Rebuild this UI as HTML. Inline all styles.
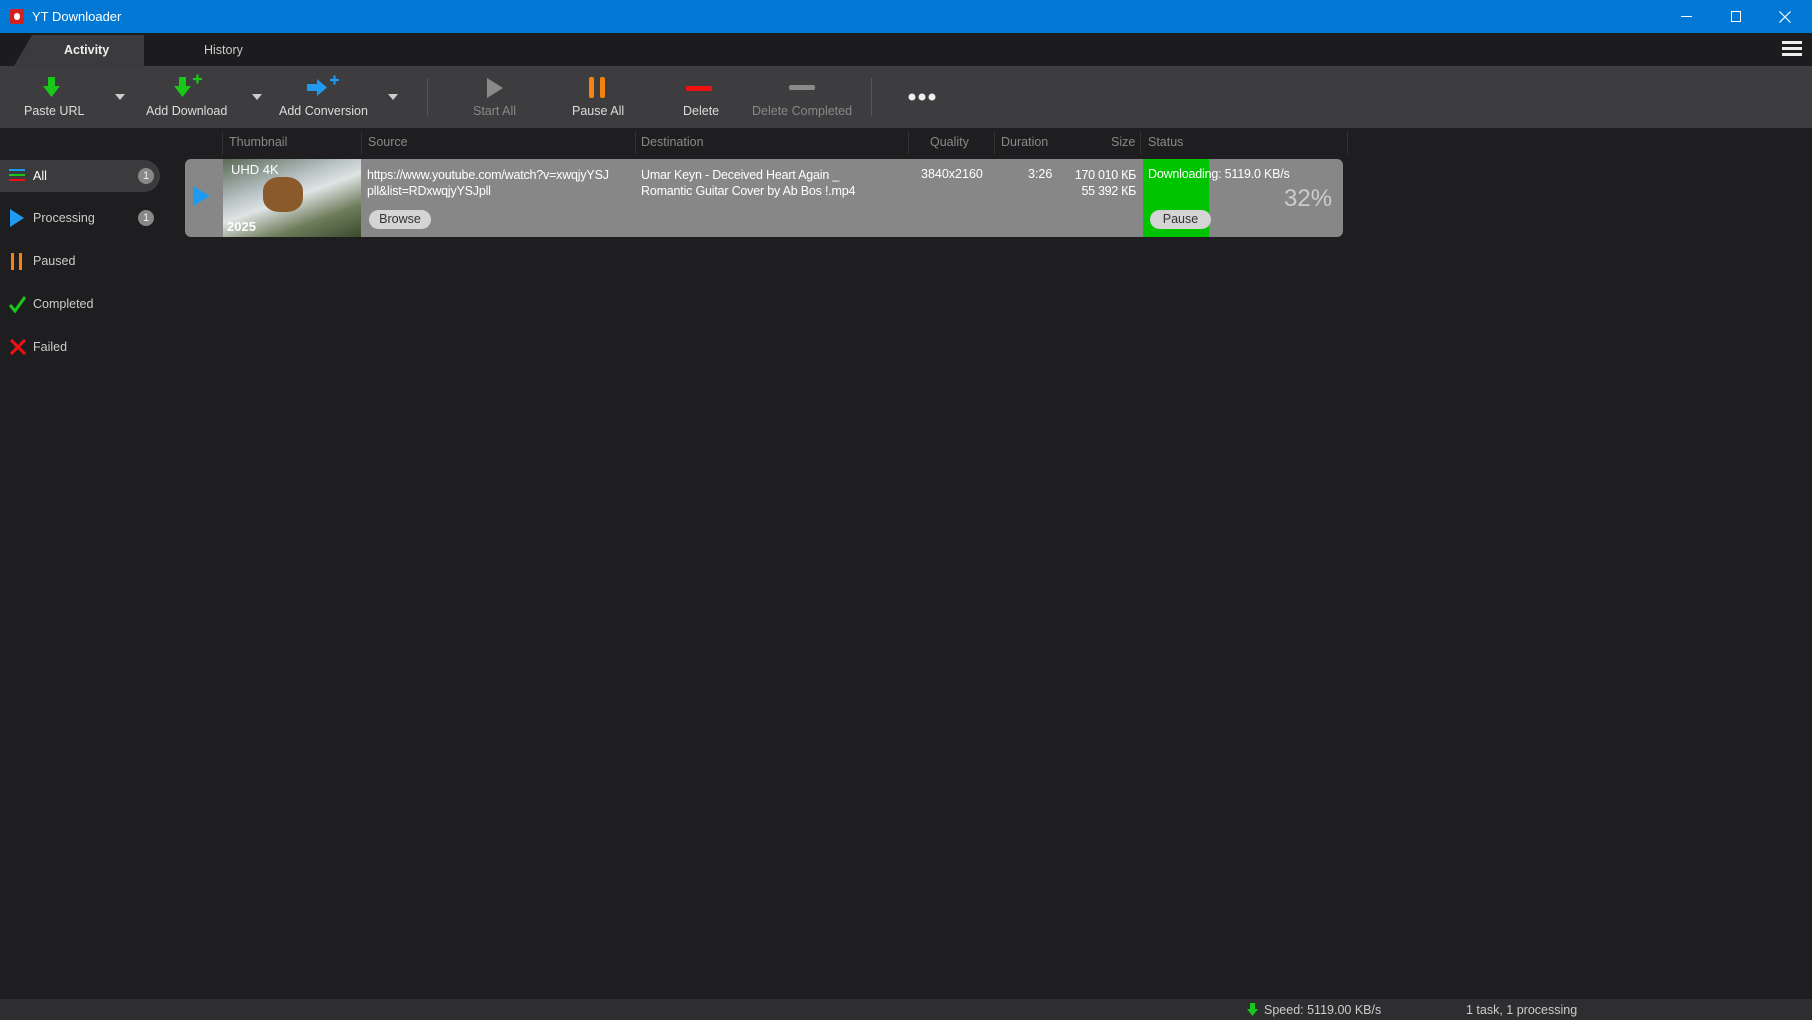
<!DOCTYPE html>
<html><head><meta charset="utf-8"><style>
*{margin:0;padding:0;box-sizing:border-box}
body{width:1812px;height:1020px;overflow:hidden;background:#1e1e20;font-family:"Liberation Sans",sans-serif;font-size:12.5px;color:#ddd;position:relative}
.a{position:absolute;white-space:nowrap}
</style></head><body>
<div class="a" style="left:0;top:0;width:1812px;height:33px;background:#0078d4"></div>
<div class="a" style="left:10px;top:9px;width:14px;height:15px;background:#d42020;border-radius:2px"></div>
<div class="a" style="left:14px;top:13px;width:6px;height:7px;background:#fff;border-radius:3px"></div>
<div class="a" style="left:32px;top:9px;color:#fff;font-size:13px">YT Downloader</div>
<div class="a" style="left:1681px;top:16px;width:11px;height:1px;background:#fff"></div>
<div class="a" style="left:1731px;top:11px;width:10px;height:11px;border:1px solid #fff"></div>
<svg class="a" style="left:1779px;top:11px" width="12" height="12"><path d="M0.5 0.5l11 11M11.5 0.5l-11 11" stroke="#fff" stroke-width="1.2"/></svg>
<div class="a" style="left:0;top:33px;width:1812px;height:33px;background:#1c1c1e"></div>
<div class="a" style="left:14px;top:35px;width:130px;height:31px;background:#3b3b3e;clip-path:polygon(18px 0,100% 0,100% 100%,0 100%)"></div>
<div class="a" style="left:64px;top:43px;color:#eee;font-weight:bold">Activity</div>
<div class="a" style="left:204px;top:43px;color:#ccc">History</div>
<div class="a" style="left:1782px;top:41px;width:20px;height:3px;background:#eee;box-shadow:0 6px 0 #eee,0 12px 0 #eee"></div>
<div class="a" style="left:0;top:66px;width:1812px;height:62px;background:#3d3c3f"></div>
<svg class="a" style="left:0;top:66px" width="1000" height="62">
<g fill="#19c719"><rect x="48" y="11" width="7" height="10"/><polygon points="43,20 60,20 51.5,31"/>
<rect x="179" y="11" width="7" height="10"/><polygon points="174,20 191,20 182.5,31"/></g>
<path d="M193 13h9M197.5 8.5v9" stroke="#19c719" stroke-width="2.2"/>
<g fill="#1e9bef"><rect x="307" y="18" width="11" height="7"/><polygon points="317,13 317,30 327,21.5"/></g>
<path d="M330 14h9M334.5 9.5v9" stroke="#1e9bef" stroke-width="2.2"/>
<g fill="#ccc"><polygon points="115,28 125,28 120,34"/><polygon points="252,28 262,28 257,34"/><polygon points="388,28 398,28 393,34"/></g>
<rect x="427" y="12" width="1" height="38" fill="#555"/><rect x="871" y="12" width="1" height="38" fill="#555"/>
<polygon points="487,12 487,32 503,22" fill="#8a8a8a"/>
<rect x="589" y="11" width="5" height="21" rx="2" fill="#f5820f"/><rect x="600" y="11" width="5" height="21" rx="2" fill="#f5820f"/>
<rect x="686" y="20" width="26" height="5" rx="1" fill="#e11"/>
<rect x="789" y="19" width="26" height="5" rx="2" fill="#8a8a8a"/>
<circle cx="912" cy="31" r="3.5" fill="#eee"/><circle cx="922" cy="31" r="3.5" fill="#eee"/><circle cx="932" cy="31" r="3.5" fill="#eee"/>
</svg>
<div class="a" style="left:24px;top:104px;color:#ddd">Paste URL</div>
<div class="a" style="left:146px;top:104px;color:#ddd">Add Download</div>
<div class="a" style="left:279px;top:104px;color:#ddd">Add Conversion</div>
<div class="a" style="left:473px;top:104px;color:#888">Start All</div>
<div class="a" style="left:572px;top:104px;color:#ddd">Pause All</div>
<div class="a" style="left:683px;top:104px;color:#ddd">Delete</div>
<div class="a" style="left:752px;top:104px;color:#888">Delete Completed</div>
<div class="a" style="left:222px;top:132px;width:1px;height:22px;background:#333"></div>
<div class="a" style="left:361px;top:132px;width:1px;height:22px;background:#333"></div>
<div class="a" style="left:635px;top:132px;width:1px;height:22px;background:#333"></div>
<div class="a" style="left:908px;top:132px;width:1px;height:22px;background:#333"></div>
<div class="a" style="left:994px;top:132px;width:1px;height:22px;background:#333"></div>
<div class="a" style="left:1140px;top:132px;width:1px;height:22px;background:#333"></div>
<div class="a" style="left:1347px;top:132px;width:1px;height:22px;background:#333"></div>
<div class="a" style="left:229px;top:135px;color:#888">Thumbnail</div>
<div class="a" style="left:368px;top:135px;color:#888">Source</div>
<div class="a" style="left:641px;top:135px;color:#888">Destination</div>
<div class="a" style="left:930px;top:135px;color:#888">Quality</div>
<div class="a" style="left:1001px;top:135px;color:#888">Duration</div>
<div class="a" style="left:1111px;top:135px;color:#888">Size</div>
<div class="a" style="left:1148px;top:135px;color:#888">Status</div>
<div class="a" style="left:0;top:160px;width:160px;height:32px;background:#3b3b3e;border-radius:0 16px 16px 0"></div>
<svg class="a" style="left:9px;top:168px" width="18" height="16"><rect y="1" width="16" height="2" fill="#1e9bef"/><rect y="6" width="16" height="2" fill="#19c719"/><rect y="11" width="16" height="2" fill="#e11"/></svg>
<div class="a" style="left:33px;top:169px;color:#fff">All</div>
<div class="a" style="left:138px;top:168px;width:16px;height:16px;border-radius:8px;background:#888;color:#eee;font-size:11px;text-align:center;line-height:16px">1</div>
<svg class="a" style="left:10px;top:209px" width="16" height="20"><polygon points="0,0 0,18 14,9" fill="#1e9bef"/></svg>
<div class="a" style="left:33px;top:211px;color:#ccc">Processing</div>
<div class="a" style="left:138px;top:210px;width:16px;height:16px;border-radius:8px;background:#888;color:#eee;font-size:11px;text-align:center;line-height:16px">1</div>
<div class="a" style="left:11px;top:253px;width:3px;height:17px;background:#f5820f"></div>
<div class="a" style="left:19px;top:253px;width:3px;height:17px;background:#f5820f"></div>
<div class="a" style="left:33px;top:254px;color:#ccc">Paused</div>
<svg class="a" style="left:9px;top:296px" width="18" height="18"><path d="M1 9l5 6L16 1" stroke="#19c719" stroke-width="3" fill="none"/></svg>
<div class="a" style="left:33px;top:297px;color:#ccc">Completed</div>
<svg class="a" style="left:10px;top:339px" width="16" height="16"><path d="M1 1l14 14M15 1L1 15" stroke="#e11" stroke-width="3"/></svg>
<div class="a" style="left:33px;top:340px;color:#ccc">Failed</div>
<div class="a" style="left:185px;top:159px;width:1158px;height:78px;background:#878787;border-radius:6px;overflow:hidden">
<div class="a" style="left:958px;top:0;width:66px;height:78px;background:#00c400"></div>
</div>
<svg class="a" style="left:193px;top:186px" width="20" height="22"><polygon points="0,0 0,20 17,10" fill="#1e9bef"/></svg>
<div class="a" style="left:223px;top:159px;width:138px;height:78px;background:linear-gradient(160deg,#5b6b58 0%,#b8c2c4 35%,#dfe4e4 50%,#6d7c5b 75%,#3b4a2c 100%);overflow:hidden">
<div class="a" style="left:40px;top:18px;width:40px;height:35px;background:#8a5a2a;border-radius:40%"></div>
<div class="a" style="left:8px;top:3px;color:#fff;font-size:13px">UHD 4K</div>
<div class="a" style="left:4px;top:60px;color:#fff;font-size:13px;font-weight:bold">2025</div>
</div>
<div class="a" style="left:367px;top:167px;color:#fff;line-height:16px;letter-spacing:-0.2px">https://www.youtube.com/watch?v=xwqjyYSJ<br>pll&amp;list=RDxwqjyYSJpll</div>
<div class="a" style="left:369px;top:210px;width:62px;height:19px;background:#d4d4d4;border-radius:10px;color:#333;text-align:center;line-height:19px">Browse</div>
<div class="a" style="left:641px;top:167px;color:#fff;line-height:16px;letter-spacing:-0.2px">Umar Keyn - Deceived Heart Again _<br>Romantic Guitar Cover by Ab Bos !.mp4</div>
<div class="a" style="left:921px;top:167px;color:#fff">3840x2160</div>
<div class="a" style="left:1028px;top:167px;color:#fff">3:26</div>
<div class="a" style="left:1060px;top:167px;color:#fff;line-height:16px;text-align:right;width:76px;letter-spacing:-0.3px">170 010 КБ<br>55 392 КБ</div>
<div class="a" style="left:1148px;top:167px;color:#fff;letter-spacing:-0.2px">Downloading: 5119.0 KB/s</div>
<div class="a" style="left:1284px;top:185px;color:#ccc;font-size:24px">32%</div>
<div class="a" style="left:1150px;top:210px;width:61px;height:19px;background:#d4d4d4;border-radius:10px;color:#333;text-align:center;line-height:19px">Pause</div>
<div class="a" style="left:0;top:999px;width:1812px;height:21px;background:#2e2e31"></div>
<svg class="a" style="left:1247px;top:1003px" width="12" height="14"><rect x="3" y="0" width="5" height="7" fill="#19c719"/><polygon points="0,6 11,6 5.5,13" fill="#19c719"/></svg>
<div class="a" style="left:1264px;top:1003px;color:#ccc">Speed: 5119.00 KB/s</div>
<div class="a" style="left:1466px;top:1003px;color:#ccc">1 task, 1 processing</div>
</body></html>
